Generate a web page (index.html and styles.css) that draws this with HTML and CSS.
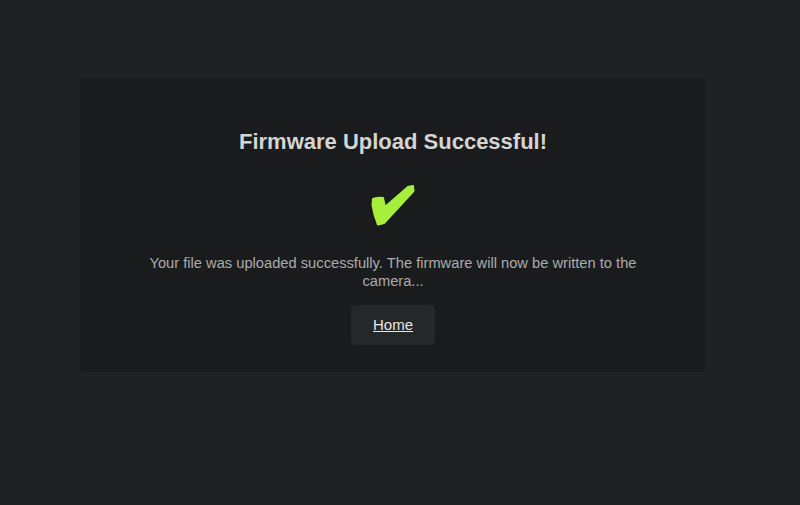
FILE: index.html
```html
<!DOCTYPE html>
<html>
<head>
<meta charset="utf-8">
<link rel="stylesheet" href="styles.css">
</head>
<body>
<div class="card">
  <h1 class="title">Firmware Upload Successful!</h1>
  <svg class="check" width="44" height="41" viewBox="0 0 44 41" aria-label="✔">
    <path d="M2 14 Q7 12.5 12 13 L14 22 L37 2 L42 1 L42.5 6 L13 38 L7 39.5 Q3 30 1.5 20 Z" fill="#a6f03c" stroke="#a6f03c" stroke-width="2" stroke-linejoin="round"/>
  </svg>
  <p class="msg">Your file was uploaded successfully. The firmware will now be written to the camera...</p>
  <a class="btn" href="#">Home</a>
</div>
</body>
</html>
```
FILE: styles.css
```css
html, body {
  margin: 0;
  padding: 0;
  background: #202124;
  font-family: "Liberation Sans", Arial, sans-serif;
}
body {
  padding-top: 78px;
}
.card {
  margin-left: 80px;
  width: 546px;
  padding: 50px 40px 27px;
  background: #1a1b1d;
  border-radius: 4px;
  text-align: center;
  display: flex;
  flex-direction: column;
  align-items: center;
}
.title {
  margin: 0;
  font-size: 22px;
  font-weight: bold;
  line-height: 28px;
  color: #d4d4d4;
}
.check {
  display: block;
  margin-top: 29px;
}
.msg {
  margin: 28px 0 0;
  font-size: 14.7px;
  line-height: 18px;
  color: #ababab;
}
.btn {
  margin-top: 15px;
  padding: 11px 22px;
  line-height: 18px;
  font-size: 15px;
  color: #e6e6e6;
  background: #25282a;
  border-radius: 4px;
  text-decoration: underline;
}
```
